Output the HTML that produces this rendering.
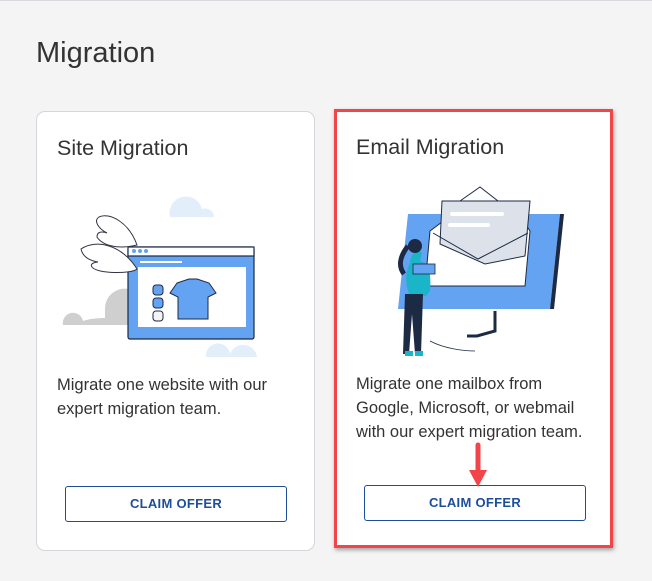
<!DOCTYPE html>
<html><head><meta charset="utf-8"><style>
*{margin:0;padding:0;box-sizing:border-box}
body{width:652px;height:581px;background:#f4f4f4;font-family:"Liberation Sans",sans-serif;position:relative;overflow:hidden;border-top:1px solid #d6d9de}
h1{position:absolute;left:36px;top:36px;font-size:29px;font-weight:400;color:#333}
.card{position:absolute;background:#fff;border:1px solid #d3d6db;border-radius:9px}
.t{position:absolute;left:20px;top:24px;font-size:21.5px;color:#333}
.d{position:absolute;left:20px;top:261px;font-size:16.5px;line-height:24px;color:#333}
.b{position:absolute;left:28px;top:374px;width:222px;height:36px;border:1px solid #1e4d9a;border-radius:3px;color:#1e4d9a;font-weight:700;font-size:13px;text-align:center;line-height:34px;letter-spacing:.3px}
.red{position:absolute;left:334px;top:108px;width:279px;height:439px;border:3px solid #f24449;box-shadow:1px 2px 4px rgba(0,0,0,.35)}
</style></head><body>
<h1>Migration</h1>
<div class="card" style="left:36px;top:110px;width:279px;height:440px">
<div class="t">Site Migration</div>
<svg style="position:absolute;left:4px;top:60px" width="250" height="190" viewBox="40 170 250 190">
<path d="M169 215a16 16 0 0 1 32-8a9 9 0 0 1 12 8z" fill="#e3eefb"/>
<path d="M62 323a10 10 0 0 1 20-4c5-2 15-3 22-3v-10a20 20 0 0 1 24-19v36z" fill="#cfcfcf"/>
<path d="M205 355a12 12 0 0 1 24-3a14 14 0 0 1 27 3z" fill="#e3eefb"/>
<rect x="127" y="245" width="126" height="92" rx="2" fill="#64a2f2" stroke="#1c2a44" stroke-width="1.2"/>
<rect x="127" y="245" width="126" height="9" fill="#fff" stroke="#1c2a44" stroke-width="1.2"/>
<circle cx="133" cy="249" r="2" fill="#64a2f2"/><circle cx="139" cy="249" r="2" fill="#64a2f2"/><circle cx="145" cy="249" r="2" fill="#64a2f2"/>
<rect x="137" y="265" width="108" height="60" fill="#fff"/>
<rect x="152" y="283" width="10" height="10" rx="3" fill="#64a2f2" stroke="#1c2a44"/>
<rect x="152" y="296" width="10" height="10" rx="3" fill="#64a2f2" stroke="#1c2a44"/>
<rect x="152" y="309" width="10" height="10" rx="3" fill="#f4f4f4" stroke="#1c2a44"/>
<path d="M176 281l12-4h8l12 4l7 10l-8 4v22h-30v-22l-8-4z" fill="#64a2f2" stroke="#1c2a44"/>
<path d="M139 260h42" stroke="#fff" stroke-width="2"/>
<path d="M98 215c10-5 30 5 38 28c-20 5-35 0-40-8c0-8 10-4 10-4c-8-4-14-12-8-16z" fill="#fff" stroke="#334" stroke-width="1"/>
<path d="M80 247c15-10 40-5 56 20c-5 5-40 5-45-2c-3-4 5-5 6-5c-6-1-15-4-17-13z" fill="#fff" stroke="#334" stroke-width="1"/>
</svg>
<div class="d">Migrate one website with our<br>expert migration team.</div>
<div class="b">CLAIM OFFER</div>
</div>
<div class="card" style="left:336px;top:110px;width:275px;height:435px;border-radius:0;border:none">
<div class="t">Email Migration</div>
<svg style="position:absolute;left:34px;top:60px" width="220" height="190" viewBox="370 170 220 190">
<path d="M408 213h152l-10 95h-152z" fill="#64a2f2"/>
<path d="M560 213h4l-10 95h-4z" fill="#1c2a44"/>
<path d="M495 310v20l-18 5h-10" stroke="#1c2a44" stroke-width="3" fill="none"/>
<path d="M430 230l20 -15h70l10 15l-5 55h-100z" fill="#fff" stroke="#1c2a44"/>
<path d="M460 200l20-14l18 14" fill="#fff" stroke="#1c2a44"/>
<path d="M442 200h88l-5 55l-40 8l-45-20z" fill="#dde2ea" stroke="#1c2a44"/>
<path d="M452 213h50M450 224h38" stroke="#fff" stroke-width="4" stroke-linecap="round"/>
<path d="M433 232l45 26l50-26" fill="none" stroke="#1c2a44"/>
<path d="M410 262c0-10 8-14 12-10l-2 8c6 2 12 4 10 30l-4 5h-16c-4-10-6-20 0-33z" fill="#1ab5c8"/>
<path d="M408 245c-8 10-10 20-4 28" stroke="#1c2a44" stroke-width="5" fill="none"/>
<circle cx="415" cy="245" r="7" fill="#1c2a44"/>
<path d="M405 293h18l-2 60h-6l-3-40l-3 40h-6z" fill="#1c2a44"/>
<path d="M405 350h8v5h-8zM415 350h8v5h-8z" fill="#1ab5c8"/>
<rect x="413" y="263" width="22" height="10" fill="#64a2f2" stroke="#1c2a44" stroke-width=".8"/>
<path d="M430 340c15 8 35 10 45 10" stroke="#1c2a44" stroke-width=".8" fill="none"/>
</svg>
<div class="d">Migrate one mailbox from<br>Google, Microsoft, or webmail<br>with our expert migration team.</div>
<div class="b">CLAIM OFFER</div>
</div>
<div class="red"></div>
<svg style="position:absolute;left:467px;top:441px" width="22" height="50"><path d="M11 3v28" stroke="#f24449" stroke-width="5" stroke-linecap="round"/><path d="M2 28h18l-9 17z" fill="#f24449"/></svg>
</body></html>
